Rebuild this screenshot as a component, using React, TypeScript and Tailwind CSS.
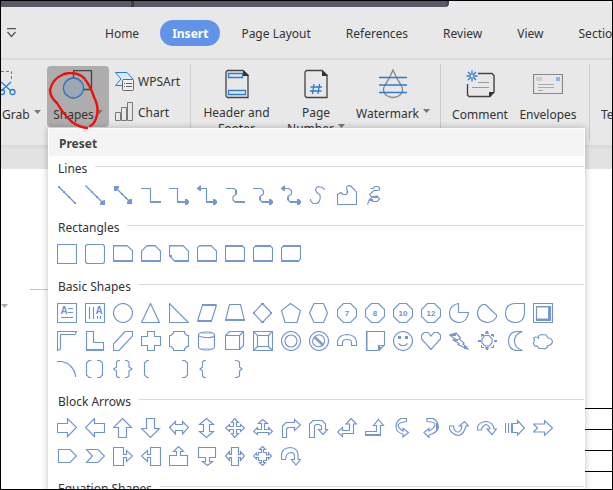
import type { ReactNode } from "react";

type Shape = {
  name: string;
  d?: string;
  fill?: string;
  soft?: string;
  text?: string;
  size?: number;
  x?: number;
  y?: number;
};

type Section = { title: string; shapes: Shape[] };

const OCTAGON = "M6.5.5H13.5L19.5 6.5V13.5L13.5 19.5H6.5L.5 13.5V6.5Z";
const CIRCLE = "M10 .5A9.5 9.5 0 1 1 10 19.5A9.5 9.5 0 1 1 10 .5Z";

const sections: Section[] = [
  {
    title: "Lines",
    shapes: [
      { name: "Line", d: "M1.5 1.5L18.5 18.5", fill: "M1 1h2v2H1zM6 6h2v2H6zM11 11h2v2h-2zM17 17h2v2h-2z" },
      { name: "Arrow", d: "M.5.5L17 17", fill: "M20 15V20H15V18L16 17V16zM6 6h2v2H6zM11 11h2v2h-2z" },
      { name: "Double arrow", d: "M3 3L17 17", fill: "M1 1H6V3L5 4V5L3 6H1zM19 14V19H14V17L15 16V15L17 14zM8 8h2v2H8zM12 12h2v2h-2z" },
      { name: "Elbow connector", d: "M0 3.5H9.5V17", fill: "M9 16H20V18H9z" },
      { name: "Elbow arrow connector", d: "M0 3.5H8.5V17", fill: "M8 16H16V14H18L20 16V18L18 20H16V18H8z" },
      { name: "Elbow double arrow connector", d: "M2 3.5H9.5V17", fill: "M9 16H16V14H18L20 16V18L18 20H16V18H9zM0 3L3 .5H4V6H3L0 4z" },
      { name: "Curved connector", d: "M1 3.5H9L11.5 5.5V9L8 11.5V15L10 17", fill: "M10 16H20V18H10zM10 5h2v4h-2z" },
      { name: "Curved arrow connector", d: "M0 3.5H8L10.5 5.5V9L7 11.5V15L9 17", fill: "M9 16H16V14H18L20 16V18L18 20H16V18H9zM6 12h2v3H6z" },
      { name: "Curved double arrow connector", d: "M2 3.5H8L10.5 5.5V9L7 11.5V15L9 17", fill: "M9 16H16V14H18L20 16V18L18 20H16V18H9zM0 3L3 .5H4V6H3L0 4zM6 12h2v3H6z" },
      { name: "Curve", d: "M16 4.5L13 2.5L9 1.5Q5 4 7.5 7L11 10Q12 16 8 18.5H4L1.5 15.5V14" },
      { name: "Freeform shape", d: "M.5 19.5V9.5L4 7.5L6 9.5H9Q12 7 9.5 4Q9 .5 13 .5Q17 4 19.5 7V19.5Z", soft: "M3 8L6 9M9 5L10 8" },
      { name: "Scribble", d: "M5.5 3.5H8L10 1.5H13L14.5 3V5L12 5.5H9L4.5 9.5L7 12L12 11L14.5 14L12 16.5H8L4.5 14.5L8 11.5M4.5 14.5L2.5 19.5", fill: "M8 11h5v2H8zM6 14h2v2H6z" },
    ],
  },
  {
    title: "Rectangles",
    shapes: [
      { name: "Rectangle", d: "M.5.5H19.5V19.5H.5Z" },
      { name: "Rounded rectangle", d: "M3 .5H17Q19.5.5 19.5 3V17Q19.5 19.5 17 19.5H3Q.5 19.5.5 17V3Q.5.5 3 .5Z" },
      { name: "Snip single corner rectangle", d: "M.5 1.5H14L19.5 6.5V17.5H.5Z", fill: "M0 16h20v2H0zM0 1h14v1.5H0z" },
      { name: "Snip same side corner rectangle", d: "M.5 17V7L6 1.5H14L19.5 7V17Z", fill: "M0 16h20v2H0zM6 1h8v1.5H6z" },
      { name: "Snip diagonal corner rectangle", d: "M.5 1.5H14L19.5 7V17.5H6L.5 12Z", fill: "M6 16h14v2H6zM1 11h2v2H1zM0 1h14v1.5H0z" },
      { name: "Snip and round corner rectangle", d: "M.5 3.5L3 1.5H14L19.5 7V17H.5Z", fill: "M0 16h20v2H0zM3 1h11v1.5H3z" },
      { name: "Round single corner rectangle", d: "M.5 1.5H17L19.5 4V17H.5Z", fill: "M0 1h18v2H0zM0 16h20v2H0z" },
      { name: "Round same side corner rectangle", d: "M.5 4L3 1.5H17L19.5 4V17H.5Z", fill: "M2 1h16v2H2zM0 16h20v2H0z" },
      { name: "Round diagonal corner rectangle", d: "M.5 4L3 1.5H19.5V15L17 17.5H.5Z", fill: "M2 1h18v2H2zM0 16h18v2H0z" },
    ],
  },
  {
    title: "Basic Shapes",
    shapes: [
      { name: "Text box", d: "M.5.5H19.5V19.5H.5ZM11 5.5H16M11 9.5H16M4 14.5H16", text: "A", size: 10, x: 7, y: 11 },
      { name: "Vertical text box", d: "M.5.5H19.5V19.5H.5ZM4.5 4V16M8.5 4V16M12.5 13V16M15.5 13V16", text: "A", size: 10, x: 14, y: 11 },
      { name: "Oval", d: CIRCLE },
      { name: "Isosceles triangle", d: "M9.5.5L18.5 19.5H.5Z" },
      { name: "Right triangle", d: "M.5.5V19.5H19.5Z" },
      { name: "Parallelogram", d: "M5.5 2H19.5L14.5 18H.5Z", fill: "M5 1h14v2H5zM1 17h14v2H1z" },
      { name: "Trapezoid", d: "M4.5 1.5H15.5L19.5 17.5H.5Z", fill: "M0 16h20v2H0z" },
      { name: "Diamond", d: "M9.5.5L18.5 10L9.5 19.5L.5 10Z", fill: "M8 0h3v2H8zM8 18h3v2H8zM0 9h2v2H0zM17 9h2v2h-2z" },
      { name: "Pentagon", d: "M9.5.5L19.5 7.5L16 19.5H4L.5 7.5Z" },
      { name: "Hexagon", d: "M5 .5H14.5L18.5 10L14.5 19.5H5L.5 10Z" },
      { name: "Heptagon", d: OCTAGON, text: "7", size: 8, x: 10, y: 13 },
      { name: "Octagon", d: OCTAGON, text: "8", size: 8, x: 10, y: 13 },
      { name: "Decagon", d: OCTAGON, text: "10", size: 8, x: 10, y: 13 },
      { name: "Dodecagon", d: OCTAGON, text: "12", size: 8, x: 10, y: 13 },
      { name: "Pie", d: "M9.5.5V9.5H19.5Q18 19.5 9.5 19.5Q.5 18 .5 10Q1 2 9.5.5Z" },
      { name: "Chord", d: "M5.5 1.5H8.5L12 5L19.5 12V14Q16 19.5 10 19.5Q.5 18 .5 10Q1 4 5.5 1.5Z" },
      { name: "Teardrop", d: "M10 .5H19.5V10Q19 19.5 10 19.5Q.5 19 .5 10Q1 1 10 .5Z" },
      { name: "Frame", d: "M.5.5H19.5V19.5H.5ZM3.5 3.5H17.5V17.5H3.5Z", fill: "M15 3h3v15h-3zM3 15.5h15v2.5H3zM3 3h15v1.5H3z" },
      { name: "Half frame", d: "M.5.5H19.5L18 3.5H3.5V18L.5 19.5Z" },
      { name: "L-shape", d: "M1.5.5H8.5V11.5H18.5V19H1.5Z", fill: "M1 18h18v2H1z" },
      { name: "Diagonal stripe", d: "M12 .5H19.5V5L6 19.5H.5V13Z" },
      { name: "Cross", d: "M6.5.5H13.5V5.5H19.5V14.5H13.5V19.5H6.5V14.5H.5V5.5H6.5Z" },
      { name: "Plaque", d: "M4.5.5H15.5V2L18 4.5H19.5V15.5H18L15.5 18V19.5H4.5V18L2 15.5H.5V4.5H2L4.5 2Z" },
      { name: "Can", d: "M1.5 4Q1.5 1 9.5 1T17.5 4T9.5 6.5T1.5 4V16Q2 19 9.5 19T17.5 16V4", soft: "M3 2.5H16M3 17.5H16" },
      { name: "Cube", d: "M.5 4.5H14.5V18.5H.5ZM.5 4.5L4.5.5H18.5V14.5L14.5 18.5M14.5 4.5L18.5.5" },
      { name: "Bevel", d: "M.5.5H19.5V19.5H.5ZM4.5 4.5H15.5V15.5H4.5ZM.5.5L4.5 4.5M19.5.5L15.5 4.5M.5 19.5L4.5 15.5M19.5 19.5L15.5 15.5" },
      { name: "Donut", d: CIRCLE + "M10 4A6 6 0 1 1 10 16A6 6 0 1 1 10 4Z" },
      { name: "No symbol", d: CIRCLE + "M6 5.5Q10 2 14 5.5Q17 9 14.5 13.5ZM5 6.5Q2 11 5.5 14.5Q10 17 13.5 14.5Z" },
      { name: "Block arc", d: "M.5 14.5V11Q1 4 10 3.5Q19 4 19.5 11V14.5H14.5V11Q14 8.5 10 8.5Q6 8.5 5.5 11V14.5Z" },
      { name: "Folded corner", d: "M1.5.5H19.5V14L14 19.5H1.5ZM14 19V14.5H19", fill: "M13 14h2v6h-2zM15 16h2v1h-2zM1 0h1.5v20H1z" },
      { name: "Smiley face", d: CIRCLE + "M5.5 12.5L8 14.5H12L14.5 12.5", fill: "M5 5h3v3H5zM12 5h3v3h-3z" },
      { name: "Heart", d: "M10 18.5L.5 8V4L3 1.5H7L10 5L13 1.5H17L19.5 4V8Z" },
      { name: "Lightning bolt", d: "M.5 4L7 2L11.5 7L10 8L15 12L14 13L19.5 18.5L9 13.5L10 12.5L4 9L6 8Z", fill: "M1 3h6v2H1zM6 8h3v2H6zM15 15h3v3h-3z" },
      { name: "Sun", d: "M8 4.5H12L15 8V12L12 15H8L5 12V8Z", fill: "M9 0h2l1 3H8zM9 19h2l1-3H8zM1 9v2h3V9zM17 9v2h3V9zM4 3h3v2H5v1H4zM14 3h3v3h-1V5h-2zM4 14h1v2h2v1H4zM16 14h1v3h-3v-1h2z" },
      { name: "Moon", d: "M12 .5Q3.5 1 3.5 10Q3.5 19 12 19.5H17.5Q9.5 17 9.5 10Q9.5 3 17.5.5Z" },
      { name: "Cloud", d: "M5.5 7Q5 4 9 3.5L13 4L15 7Q19 7 19.5 11Q18 15 15 14.5Q13 19 9.5 17.5H6L4 15Q1 16 .5 12L1.5 9L.5 7Q3 5 5.5 7Z" },
      { name: "Arc", d: "M0 2.5H5Q16 5 18.5 16V18" },
      { name: "Double bracket", d: "M6.5 1.5H4L1.5 4V16L4 18.5H6.5M12 1.5H15L17.5 4V16L15 18.5H12" },
      { name: "Double brace", d: "M7 1.5H5L3.5 3V8L.5 10L3.5 12V17L5 18.5H7M12 1.5H14L16 3V8L19 10L16 12V17L14 18.5H12" },
      { name: "Left bracket", d: "M8 1.5H6L3.5 4V16L6 18.5H8" },
      { name: "Right bracket", d: "M13 1.5H16L18.5 4V16L16 18.5H13" },
      { name: "Left brace", d: "M9 1.5H7L5.5 3V8L3 10L5.5 12V17L7 18.5H9" },
      { name: "Right brace", d: "M10 1.5H12L14.5 3V8L17 10L14.5 12V17L12 18.5H10" },
    ],
  },
  {
    title: "Block Arrows",
    shapes: [
      { name: "Right arrow", d: "M.5 5.5H10.5V.5L19.5 9.5L10.5 18.5V14.5H.5Z" },
      { name: "Left arrow", d: "M19.5 5.5H9.5V.5L.5 9.5L9.5 18.5V14.5H19.5Z" },
      { name: "Up arrow", d: "M5.5 19.5V9.5H.5L9.5.5L18.5 9.5H13.5V19.5Z" },
      { name: "Down arrow", d: "M5.5.5V10.5H.5L9.5 19.5L18.5 10.5H13.5V.5Z" },
      { name: "Left-right arrow", d: "M.5 9.5L6.5 3.5V6.5H13.5V3.5L19.5 9.5L13.5 16V12.5H6.5V16Z" },
      { name: "Up-down arrow", d: "M9.5.5L16.5 6.5H12.5V13.5H16.5L9.5 19.5L2.5 13.5H6.5V6.5H2.5Z" },
      { name: "Quad arrow", d: "M9.5.5L13.5 4.5H11.5V8.5H15.5V6.5L19.5 10L15.5 13.5V11.5H11.5V15.5H13.5L9.5 19.5L6.5 15.5H8.5V11.5H4.5V13.5L.5 10L4.5 6.5V8.5H8.5V4.5H6.5Z" },
      { name: "Left-right-up arrow", d: "M9.5 1.5L14.5 5.5H11.5V11.5H15.5V9.5L19.5 13.5L15.5 16.5V14.5H4.5V16.5L.5 13.5L4.5 9.5V11.5H8.5V5.5H5.5Z" },
      { name: "Bent arrow", d: "M1.5 19.5V8L5 4.5H13.5V1.5L19.5 7L13.5 12.5V9.5H7L5.5 11V19.5Z" },
      { name: "U-turn arrow", d: "M.5 19.5V6L4 2.5H13L16.5 6V11.5H18.5L14 16.5L9.5 11.5H12.5V8L10 6.5H7L5.5 8V19.5Z" },
      { name: "Left-up arrow", d: "M14 .5L19.5 6H16.5V15.5H5.5V18.5L.5 14L5.5 9.5V12.5H12.5V6H9Z" },
      { name: "Bent-up arrow", d: "M13.5 1.5L18.5 7.5H15.5V17.5H.5V13.5H11.5V7.5H8.5Z", fill: "M0 16h16v2H0z" },
      { name: "Curved right arrow", d: "M13.5.5H8Q3 3 3 9Q4 15 10 16V19L15.5 14.5L10 10.5V13Q5 10 5 7Q7 4 13.5 3.5Z" },
      { name: "Curved left arrow", d: "M6 .5H12Q17 3 17.5 9Q16 15 8 17V19.5L3 14.5L8 10.5V13Q14 10 14 6Q12 3.5 6 3.5Z", fill: "M15 5h2v8h-2z" },
      { name: "Curved up arrow", d: "M.5 8V11Q3 17 10 17.5Q15 16 17 8H19.5L15.5 3.5L10.5 8H13Q12 14 9 14Q5 14 4.5 8Z" },
      { name: "Curved down arrow", d: "M.5 12V9Q2 4 9 3.5Q16 4 17 11H19.5L15 16.5L10 11H13Q12 7 9 6.5Q5 8 4.5 12Z" },
      { name: "Striped right arrow", d: "M.5 5V15M3.5 5V15M6.5 5.5H12.5V2.5L19.5 10L12.5 17V14.5H6.5Z", fill: "M6 5h2v10H6z" },
      { name: "Notched right arrow", d: "M.5 6H11.5V2.5L19.5 10L11.5 17.5V14H.5L4.5 10Z" },
      { name: "Pentagon arrow", d: "M1.5 3.5H13L19.5 10L13 16.5H1.5Z" },
      { name: "Chevron", d: "M1.5 3.5H13L19.5 10L13 16.5H1.5L7.5 10Z" },
      { name: "Right arrow callout", d: "M.5 1.5H10.5V8.5H13.5V4.5L19.5 10L13.5 15.5V11.5H10.5V19.5H.5Z" },
      { name: "Left arrow callout", d: "M19.5 1.5H9.5V8.5H6.5V4.5L.5 10L6.5 15.5V11.5H9.5V19.5H19.5Z" },
      { name: "Up arrow callout", d: "M.5 9.5H7.5V5.5H4.5L9.5.5L14.5 5.5H11.5V9.5H18.5V19.5H.5Z" },
      { name: "Down arrow callout", d: "M1.5 1.5H18.5V11.5H12.5V15.5H15.5L10.5 19.5L5.5 15.5H8.5V11.5H1.5Z" },
      { name: "Left-right arrow callout", d: "M6.5 1.5H13.5V8.5H15.5V5.5L19.5 10L15.5 14.5V11.5H13.5V19.5H6.5V11.5H4.5V14.5L.5 10L4.5 5.5V8.5H6.5Z" },
      { name: "Quad arrow callout", d: "M9.5.5L12.5 3.5H10.5V6.5H13.5V9H15.5V7L18.5 10L15.5 13V11.5H13.5V14.5H10.5V16.5H12.5L9.5 19.5L6.5 16.5H8.5V14.5H5.5V11.5H3.5V13L.5 10L3.5 7V9H5.5V6.5H8.5V3.5H6.5Z" },
      { name: "Circular arrow", d: "M.5 13.5V8Q2 1.5 9.5 1.5Q16 2 17 8V13.5H19.5L15 19L10.5 13.5H13.5V9Q13 6.5 9.5 6.5Q5 7 4.5 13.5Z" },
    ],
  },
  { title: "Equation Shapes", shapes: [] },
];

function ShapeIcon({ shape }: { shape: Shape }) {
  return (
    <svg viewBox="0 0 20 20" className="block size-5 fill-none stroke-[#7094d0]" aria-hidden="true">
      {shape.d && <path d={shape.d} strokeWidth="1.15" />}
      {shape.soft && <path d={shape.soft} opacity=".4" />}
      {shape.fill && <path d={shape.fill} className="fill-[#7797d2] stroke-none" />}
      {shape.text && (
        <text
          x={shape.x}
          y={shape.y}
          fontSize={shape.size}
          textAnchor="middle"
          className="fill-[#7094d0] stroke-none font-['Liberation_Sans',sans-serif] font-bold"
        >
          {shape.text}
        </text>
      )}
    </svg>
  );
}

function ShapeSection({ title, shapes }: Section) {
  return (
    <section className="pb-3.5 pl-2">
      <div className="flex h-4 items-start gap-2">
        <h3 className="pt-px pl-px leading-4">{title}</h3>
        <div className="mt-1.5 h-px flex-1 bg-[#d9d9d9]" />
      </div>
      <div className="mt-[9px] grid grid-cols-[repeat(18,20px)] gap-2">
        {shapes.map((shape) => (
          <button key={shape.name} type="button" aria-label={shape.name} className="size-5">
            <ShapeIcon shape={shape} />
          </button>
        ))}
      </div>
    </section>
  );
}

function Caret() {
  return (
    <svg viewBox="0 0 7 4" className="mb-1.5 h-1 w-[7px] shrink-0 fill-[#777]" aria-hidden="true">
      <path d="M0 0H7L3.5 4Z" />
    </svg>
  );
}

function Divider() {
  return <div className="my-1 w-px shrink-0 bg-[#cccccc]" />;
}

function ToolButton({ className, icon, children }: { className: string; icon: ReactNode; children: ReactNode }) {
  return (
    <button type="button" className={`flex shrink-0 flex-col items-center whitespace-nowrap ${className}`}>
      <span className="flex h-8 items-center">{icon}</span>
      {children}
    </button>
  );
}

const tabs = ["Home", "Insert", "Page Layout", "References", "Review", "View", "Section"];

export default function App() {
  return (
    <div className="relative flex h-screen w-full flex-col overflow-hidden border border-black bg-white font-['Noto_Sans',sans-serif] text-[12px] leading-4 text-[#333]">
      <div className="flex h-1.5 shrink-0 bg-[#ece7ec]">
        <div className="w-[130px] bg-[#5b5967]" />
        <div className="w-[3px] bg-[#3d3c49]" />
        <div className="w-[315px] rounded-br-sm border-r-2 border-[#44424f] bg-[#5b5967]" />
      </div>

      <nav className="flex h-[51px] shrink-0 items-center overflow-hidden bg-[#e8e8e8]">
        <button type="button" aria-label="Customize toolbar" className="ml-1 w-[88px] shrink-0">
          <svg viewBox="0 0 11 10" className="ml-px h-2.5 w-[11px] fill-none stroke-[#555]" aria-hidden="true">
            <path d="M1 .5H10M1.5 4L5.5 8.5L9.5 4" strokeWidth="1.3" />
          </svg>
        </button>
        <div className="flex shrink-0 gap-[11px]">
          {tabs.map((tab) => (
            <button
              key={tab}
              type="button"
              className={
                tab === "Insert"
                  ? "-mx-0.5 h-[26px] shrink-0 rounded-full bg-[#6193e8] px-3 pt-0.5 font-bold text-white"
                  : "h-[26px] shrink-0 px-3 pt-0.5 whitespace-nowrap"
              }
            >
              {tab}
            </button>
          ))}
        </div>
      </nav>

      <div className="flex h-[87px] shrink-0 overflow-hidden border-t-2 border-[#d9d9d9] bg-[#e8e8e8]">
        <button type="button" className="flex w-[46px] shrink-0 flex-col pt-2.5">
          <svg viewBox="0 0 16 30" className="h-[30px] w-4 fill-none" aria-hidden="true">
            <path d="M0 1.5H10.5V10" stroke="#777" strokeDasharray="3 2" />
            <path d="M0 12L10 21M10 12L0 21" stroke="#2b7cd3" strokeWidth="1.3" />
            <circle cx="11.5" cy="22" r="2.5" stroke="#2b7cd3" strokeWidth="1.3" />
            <circle cx="1" cy="22" r="2.5" stroke="#2b7cd3" strokeWidth="1.3" />
          </svg>
          <span className="mt-1.5 flex items-center gap-1 pt-px pl-px">
            Grab
            <Caret />
          </span>
        </button>
        <button type="button" className="mt-1.5 flex h-[61px] w-[62px] shrink-0 flex-col items-center rounded-sm bg-[#adadad]">
          <svg viewBox="0 0 32 32" className="mt-1 h-8 w-8 fill-none" aria-hidden="true">
            <rect x="11.5" y=".5" width="18" height="19" rx="1" stroke="#444" strokeWidth="1.3" />
            <circle cx="11.5" cy="18" r="10" fill="#9da8b5" stroke="#2b73bd" strokeWidth="1.3" />
          </svg>
          <span className="mt-[5px] flex items-center gap-0.5">
            Shapes
            <Caret />
          </span>
        </button>
        <div className="flex w-[81px] shrink-0 flex-col gap-[11px] pt-[11px] pl-1.5">
          <button type="button" className="flex h-5 items-center gap-1">
            <svg viewBox="0 0 19 20" className="h-5 w-[19px] fill-none" aria-hidden="true">
              <path d="M.5 1.5H12L18 8L12 14.5H.5L6 8Z" fill="#dce9f8" stroke="#2b7cd3" />
              <rect x="7.5" y="8.5" width="11" height="11" rx="1" fill="#eee" stroke="#666" />
              <path d="M9 12.5H10M11 12.5H17M9 15.5H10M11 15.5H17" stroke="#666" />
            </svg>
            <span className="pt-0.5">WPSArt</span>
          </button>
          <button type="button" className="flex h-5 items-center gap-1">
            <svg viewBox="0 0 19 20" className="h-5 w-[19px] fill-none stroke-[#777]" aria-hidden="true">
              <path d="M.5 10.5H5.5V18.5H.5ZM6.5 5.5H11.5V18.5H6.5ZM12.5.5H17.5V18.5H12.5Z" />
            </svg>
            <span className="pt-0.5">Chart</span>
          </button>
        </div>
        <Divider />
        <ToolButton
          className="w-[91px] pt-2"
          icon={
            <svg viewBox="0 0 24 30" className="h-[30px] w-6 fill-none" aria-hidden="true">
              <path d="M2.5 1.5H18L23 6V28.5H2.5L1 27V3Z" stroke="#444" strokeWidth="1.3" />
              <path d="M18 1L24 7H18Z" fill="#333" />
              <path d="M3.5 4.5H17.5V8.5H3.5ZM3.5 21.5H20.5V25.5H3.5Z" stroke="#2b7cd3" strokeWidth="1.3" />
            </svg>
          }
        >
          <span className="mt-[5px]">Header and<br />Footer</span>
        </ToolButton>
        <ToolButton
          className="w-[68px] pt-2"
          icon={
            <svg viewBox="0 0 24 30" className="h-[30px] w-6 fill-none" aria-hidden="true">
              <path d="M2.5 1.5H18L23 6V28.5H2.5L1 27V3Z" stroke="#444" strokeWidth="1.3" />
              <path d="M18 1L24 7H18Z" fill="#333" />
              <path d="M10 15L8.5 25M15.5 15L14 25M6.5 18H18M6 22H17.5" stroke="#2b7cd3" strokeWidth="1.3" />
            </svg>
          }
        >
          <span className="mt-[5px]">Page</span>
          <span className="flex items-center gap-1">
            Number
            <Caret />
          </span>
        </ToolButton>
        <ToolButton
          className="mr-1 w-[86px] pt-2"
          icon={
            <svg viewBox="0 0 28 30" className="h-[30px] w-7 fill-none" aria-hidden="true">
              <path d="M14 1Q17 9 22 16Q26 23 19.5 27Q14 30 8.5 27Q2 23 6 16Q11 9 14 1Z" stroke="#888" strokeWidth="1.3" />
              <path d="M0 8.5H28M0 16H28M0 23.5H28" stroke="#2b7cd3" strokeWidth="1.3" />
            </svg>
          }
        >
          <span className="mt-1.5 flex items-center gap-1">
            Watermark
            <Caret />
          </span>
        </ToolButton>
        <Divider />
        <ToolButton
          className="w-[78px] pt-2"
          icon={
            <svg viewBox="0 0 30 30" className="size-[30px] fill-none" aria-hidden="true">
              <path d="M13 4.5H27L29 6.5V23L25 27.5H4L2.5 26V15" stroke="#444" strokeWidth="1.4" />
              <path d="M24 28V23H29.5Z" fill="#333" />
              <path d="M13 13.5H24M7 18.5H24" stroke="#999" />
              <path d="M7 1.5V12.5M1.5 7H12.5M3 3L11 11M11 3L3 11" stroke="#2b7cd3" strokeWidth="1.3" />
              <circle cx="7" cy="7" r="1.5" fill="#e8e8e8" />
            </svg>
          }
        >
          <span className="mt-[7px]">Comment</span>
        </ToolButton>
        <ToolButton
          className="mr-[11px] -ml-px w-[60px] pt-2"
          icon={
            <svg viewBox="0 0 30 22" className="h-[22px] w-[30px] fill-none" aria-hidden="true">
              <path d="M.5 1.5H29.5V20.5H.5Z" stroke="#888" strokeWidth="1.2" />
              <path d="M3 4H9V8H3Z" fill="#ccc" />
              <path d="M23 4H27V8H23Z" fill="#8eb4f0" />
              <path d="M5 11.5H21M5 14.5H21M5 17.5H10" stroke="#aaa" />
            </svg>
          }
        >
          <span className="mt-[7px]">Envelopes</span>
        </ToolButton>
        <Divider />
        <button type="button" className="mt-[47px] ml-[11px] h-4 shrink-0">Text Box</button>
      </div>

      <div className="h-6 shrink-0 bg-linear-to-b from-[#d8d8d8] to-[#e2e2e2] to-20%" />

      <main className="flex min-h-0 flex-1 justify-between">
        <div className="w-12 pt-[120px]">
          <div className="ml-[29px] h-px bg-[#c4c4c4]" />
          <svg viewBox="0 0 7 4" className="mt-3.5 h-1 w-[7px] fill-[#aaa]" aria-hidden="true">
            <path d="M0 0H7L3.5 4Z" />
          </svg>
        </div>
        <div className="flex w-7 flex-col pt-[239px]">
          {[0, 1, 2, 3].map((row) => (
            <div key={row} className="h-[21px] shrink-0 border-t border-black" />
          ))}
        </div>
      </main>

      <div className="absolute top-[127px] right-[27px] left-[47px] border border-white bg-white shadow-[0_0_6px_1px_rgba(0,0,0,0.2)]">
        <h2 className="h-[27px] bg-[#f4f4f4] pl-2.5 leading-[29px] font-bold text-[#444]">Preset</h2>
        <div className="pt-1">
          {sections.map((section) => (
            <ShapeSection key={section.title} {...section} />
          ))}
        </div>
      </div>

      <svg viewBox="0 0 54 60" className="pointer-events-none absolute top-[71px] left-[47px] h-[60px] w-[54px] fill-none" aria-hidden="true">
        <path
          d="M39 56Q31 55 24 50Q16 43 9 31Q2 25 2 18Q4 7 16 2Q28 -1 36 6Q42 13 46 25Q51 35 49 43Q47 52 42 54"
          stroke="#f40b0b"
          strokeWidth="2.4"
          strokeLinecap="round"
        />
      </svg>
    </div>
  );
}
